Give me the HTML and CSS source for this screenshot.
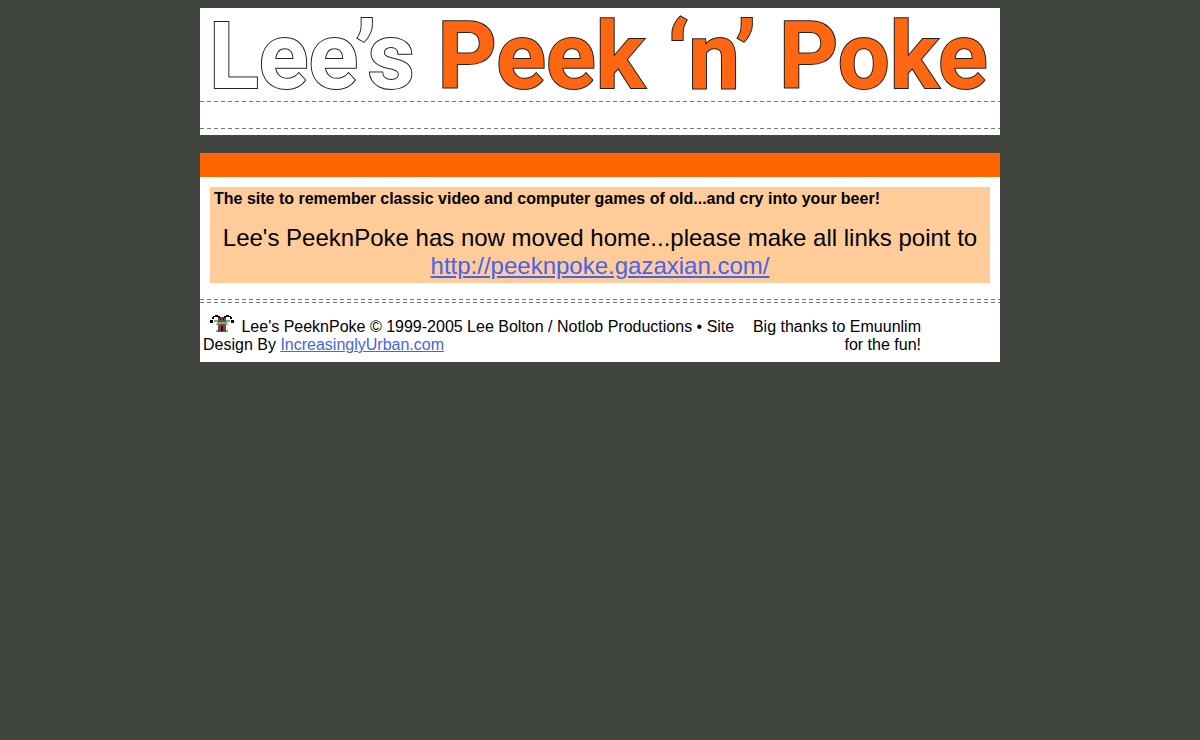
FILE: index.html
```html
<!DOCTYPE html>
<html lang="en">
<head>
    <meta charset="UTF-8">
    <meta name="viewport" content="width=device-width, initial-scale=1.0">
    <title>Lee's Peek 'n' Poke</title>
    <link rel="stylesheet" href="styles.css">
</head>
<body>
    <div class="header">
        <h1 class="logo"><span>Lee’s</span> Peek ‘n’ Poke</h1>
        <div class="dashes"></div>
        <div class="nav"></div>
        <div class="dashes"></div>
    </div>

    <div class="page">
        <div class="bar"></div>
        <div class="content">
            <p class="tagline">The site to remember classic video and computer games of old...and cry into your beer!</p>
            <p class="moved">Lee's PeeknPoke has now moved home...please make all links point to <a href="http://peeknpoke.gazaxian.com/">http://peeknpoke.gazaxian.com/</a></p>
        </div>
        <div class="double">
            <div class="dashes"></div>
            <div class="dashes"></div>
        </div>
        <div class="footer">
            <p class="copyright">
                <svg class="sprite" viewBox="0 0 24 17" width="24" height="17" shape-rendering="crispEdges" aria-hidden="true">
                    <path fill="#66b380" d="M4 5h4v2h8v-2h4v2h-3v2h-10v-2h-3zM6 9h4v1h-4zM14 9h4v1h-4zM6 15h12v2h-12z"/>
                    <path fill="#000" d="M3 1h2v-1h3v1h2v3h-2v-2h-4v2h-2v-2h1zM14 1h2v-1h3v1h2v1h1v2h-2v-2h-4v2h-2zM0 5h3v3h-3zM21 5h3v3h-3z"/>
                    <path fill="#8a4040" d="M10 2h4v1h2v4h-8v-4h2zM9 9h6v1h1v7h-8v-7h1z"/>
                    <path fill="#211" d="M10 3h1v2h-1zM13 3h1v2h-1zM11 11h2v5h-2z"/>
                </svg>
                Lee's PeeknPoke © 1999-2005 Lee Bolton / Notlob Productions • Site Design By <a href="#">IncreasinglyUrban.com</a>
            </p>
            <p class="thanks">Big thanks to Emuunlim for the fun!</p>
        </div>
    </div>
</body>
</html>
```
FILE: styles.css
```css
body {
    margin: 8px;
    background: #404540;
    color: #000;
    font-family: Arial, "Liberation Sans", sans-serif;
    font-size: 16px;
    line-height: 18px;
}

p {
    margin: 0;
}

a {
    color: #4463ee;
}

.header,
.page {
    max-width: 800px;
    margin: 0 auto;
    background: #fff;
}

.header {
    padding-bottom: 6px;
    margin-bottom: 18px;
}

/* outlined wordmark, fill painted over the inner half of the stroke */
.logo {
    margin: 0;
    padding: 4px 0 0 9px;
    font-family: Roboto, "Liberation Sans", sans-serif;
    font-size: 92px;
    line-height: 89px;
    font-weight: bold;
    white-space: nowrap;
    color: #ff6611;
    -webkit-text-stroke: 2px #222;
    paint-order: stroke fill;
}

.logo span {
    color: #fff;
}

.dashes {
    height: 1px;
    background: repeating-linear-gradient(to right, #777 0, #777 4px, #fff 4px, #fff 7px);
}

.nav {
    height: 26px;
}

.bar {
    height: 24px;
    background: #ff6600;
}

.content {
    margin: 10px 10px 16px;
    padding: 3px 4px;
    background: #ffcc99;
}

.tagline {
    font-weight: bold;
}

.moved {
    margin-top: 16px;
    font-size: 24px;
    line-height: 28px;
    text-align: center;
}

.double {
    display: grid;
    gap: 2px;
}

.footer {
    display: flex;
    gap: 12px;
    padding: 15px 79px 8px 3px;
}

.copyright {
    flex: 1;
}

.sprite {
    margin: -4px 3px 0 7px;
}

.thanks {
    width: 171px;
    text-align: right;
}
```
